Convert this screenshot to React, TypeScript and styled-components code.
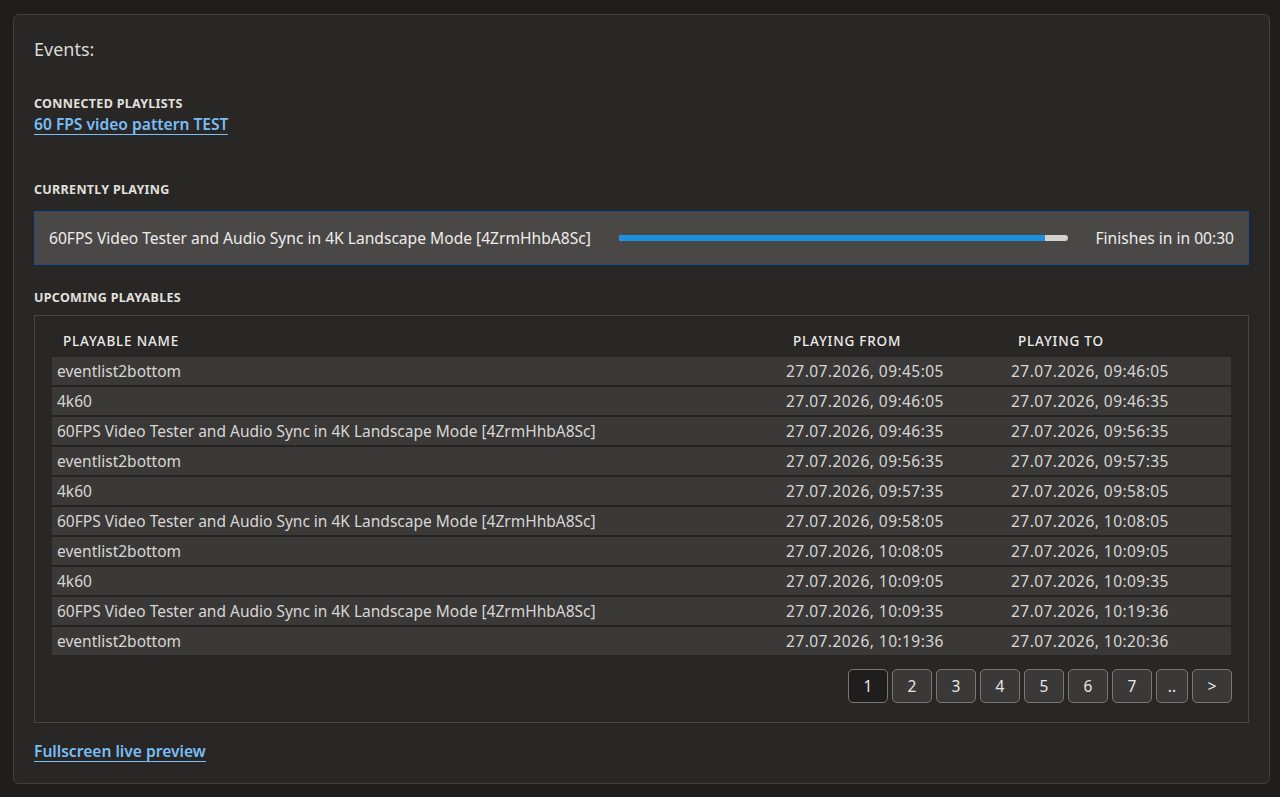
import React from 'react';
import styled, { createGlobalStyle } from 'styled-components';

const GlobalStyle = createGlobalStyle`
	html, body {
		margin: 0;
		padding: 0;
		background: #1f1e1d;
	}
	body {
		font-family: 'Noto Sans', 'Open Sans', sans-serif;
		color: #e6e4e1;
	}
`;

interface Playable {
	name: string;
	from: string;
	to: string;
}

const playables: Playable[] = [
	{ name: 'eventlist2bottom', from: '27.07.2026, 09:45:05', to: '27.07.2026, 09:46:05' },
	{ name: '4k60', from: '27.07.2026, 09:46:05', to: '27.07.2026, 09:46:35' },
	{ name: '60FPS Video Tester and Audio Sync in 4K Landscape Mode [4ZrmHhbA8Sc]', from: '27.07.2026, 09:46:35', to: '27.07.2026, 09:56:35' },
	{ name: 'eventlist2bottom', from: '27.07.2026, 09:56:35', to: '27.07.2026, 09:57:35' },
	{ name: '4k60', from: '27.07.2026, 09:57:35', to: '27.07.2026, 09:58:05' },
	{ name: '60FPS Video Tester and Audio Sync in 4K Landscape Mode [4ZrmHhbA8Sc]', from: '27.07.2026, 09:58:05', to: '27.07.2026, 10:08:05' },
	{ name: 'eventlist2bottom', from: '27.07.2026, 10:08:05', to: '27.07.2026, 10:09:05' },
	{ name: '4k60', from: '27.07.2026, 10:09:05', to: '27.07.2026, 10:09:35' },
	{ name: '60FPS Video Tester and Audio Sync in 4K Landscape Mode [4ZrmHhbA8Sc]', from: '27.07.2026, 10:09:35', to: '27.07.2026, 10:19:36' },
	{ name: 'eventlist2bottom', from: '27.07.2026, 10:19:36', to: '27.07.2026, 10:20:36' },
];

const pages = ['1', '2', '3', '4', '5', '6', '7', '..', '>'];

const Page = styled.div`
	padding: 14px 10px 13px 13px;
`;

const Card = styled.section`
	background: #282726;
	border: 1px solid #434140;
	border-radius: 6px;
	padding: 22px 20px 21px 20px;
	display: flex;
	flex-direction: column;
`;

const Title = styled.h2`
	margin: 0 0 35px;
	font-size: 18px;
	font-weight: 400;
	line-height: 24px;
	color: #dcdad7;
`;

const Label = styled.h3`
	margin: 0;
	font-size: 12.5px;
	font-weight: 700;
	line-height: 16px;
	letter-spacing: 0.3px;
	text-transform: uppercase;
	color: #e2e0dd;
`;

const Link = styled.a`
	display: inline-block;
	align-self: flex-start;
	font-size: 15.6px;
	font-weight: 600;
	line-height: 20px;
	color: #79bef5;
	text-decoration: none;
	border-bottom: 1px solid #79bef5;
	cursor: pointer;
`;

const Section = styled.div<{ $gap: number; $mb: number }>`
	display: flex;
	flex-direction: column;
	gap: ${(p) => p.$gap}px;
	margin-bottom: ${(p) => p.$mb}px;
`;

const NowPlaying = styled.div`
	display: flex;
	align-items: center;
	gap: 28px;
	height: 54px;
	box-sizing: border-box;
	padding: 0 14px;
	background: #4a4847;
	border: 1px solid #1a4f8e;
	font-size: 15.6px;
	color: #eeece9;
`;

const NowTitle = styled.span`
	white-space: nowrap;
`;

const Track = styled.div`
	flex: 1;
	height: 6px;
	border-radius: 3px;
	background: #d4d2cf;
	overflow: hidden;
`;

const Fill = styled.div`
	height: 100%;
	background: #1d8fe1;
`;

const Remaining = styled.span`
	white-space: nowrap;
`;

const TableBox = styled.div`
	border: 1px solid #484644;
	padding: 13px 17px 19px 17px;
	display: flex;
	flex-direction: column;
`;

const Table = styled.table`
	width: 100%;
	table-layout: fixed;
	border-collapse: collapse;
	font-size: 15.5px;
`;

const Th = styled.th<{ $w?: number; $pad: number }>`
	box-sizing: border-box;
	text-align: left;
	font-size: 13.5px;
	font-weight: 500;
	letter-spacing: 0.8px;
	text-transform: uppercase;
	color: #ecebe8;
	padding: 0 0 5px ${(p) => p.$pad}px;
	height: 28px;
	width: ${(p) => (p.$w ? `${p.$w}px` : 'auto')};
`;

const Tr = styled.tr`
	background: #3a3938;
	border-bottom: 2px solid #252423;
	&:last-child {
		border-bottom: none;
	}
`;

const Td = styled.td<{ $date?: boolean }>`
	height: 28px;
	padding: 0 5px;
	color: #d8d6d3;
	white-space: nowrap;
	overflow: hidden;
	letter-spacing: ${(p) => (p.$date ? '0.45px' : 'normal')};
`;

const Pager = styled.div`
	display: flex;
	justify-content: flex-end;
	gap: 4px;
	margin: 14px -1px 0 0;
`;

const PageButton = styled.button<{ $active?: boolean; $narrow?: boolean }>`
	width: ${(p) => (p.$narrow ? 32 : 40)}px;
	height: 34px;
	border-radius: 5px;
	border: 1px solid #7a7876;
	background: ${(p) => (p.$active ? '#1f1e1d' : '#3a3938')};
	color: #e8e6e3;
	font-family: inherit;
	font-size: 15.5px;
	padding: 0;
	cursor: pointer;
`;

const Footer = styled.div`
	margin-top: 18px;
	display: flex;
`;

const App = () => {
	const progress = 95;
	return (
		<>
			<GlobalStyle />
			<Page>
				<Card>
					<Title>Events:</Title>
					<Section $gap={2} $mb={47}>
						<Label>Connected playlists</Label>
						<Link>60 FPS video pattern TEST</Link>
					</Section>
					<Section $gap={13} $mb={25}>
						<Label>Currently playing</Label>
						<NowPlaying>
							<NowTitle>60FPS Video Tester and Audio Sync in 4K Landscape Mode [4ZrmHhbA8Sc]</NowTitle>
							<Track>
								<Fill style={{ width: `${progress}%` }} />
							</Track>
							<Remaining>Finishes in in 00:30</Remaining>
						</NowPlaying>
					</Section>
					<Section $gap={9} $mb={0}>
						<Label>Upcoming playables</Label>
						<TableBox>
							<Table>
								<thead>
									<tr>
										<Th $pad={11}>Playable name</Th>
										<Th $w={225} $pad={12}>Playing from</Th>
										<Th $w={225} $pad={12}>Playing to</Th>
									</tr>
								</thead>
								<tbody>
									{playables.map((p, i) => (
										<Tr key={i}>
											<Td>{p.name}</Td>
											<Td $date>{p.from}</Td>
											<Td $date>{p.to}</Td>
										</Tr>
									))}
								</tbody>
							</Table>
							<Pager>
								{pages.map((p, i) => (
									<PageButton key={p} $active={i === 0} $narrow={p === '..'}>
										{p}
									</PageButton>
								))}
							</Pager>
						</TableBox>
					</Section>
					<Footer>
						<Link>Fullscreen live preview</Link>
					</Footer>
				</Card>
			</Page>
		</>
	);
};

export default App;
